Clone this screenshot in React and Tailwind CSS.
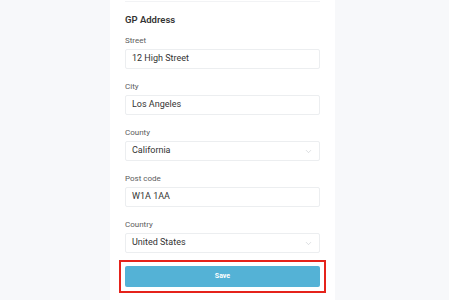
import { ChevronDown } from 'lucide-react';

const fields = [
    { label: 'Street', value: '12 High Street' },
    { label: 'City', value: 'Los Angeles' },
    { label: 'County', value: 'California', select: true },
    { label: 'Post code', value: 'W1A 1AA' },
    { label: 'Country', value: 'United States', select: true },
];

export default function App() {
    return (
        <div
            className="min-h-screen bg-[#f7f8fa] flex"
            style={{ fontFamily: 'Roboto, "Liberation Sans", sans-serif' }}
        >
            <div className="ml-[110px] w-[225px] min-h-[300px] bg-white px-[15px]">
                {/* bottom edge of the previous section */}
                <div className="h-[2px] border-b border-[#f2f3f5]" />

                <h2 className="mt-[12px] h-[12px] leading-[12px] text-[9.5px] font-semibold text-[#333]">
                    GP Address
                </h2>

                <div className="mt-[10px] flex flex-col gap-[13px]">
                    {fields.map((f) => (
                        <div key={f.label}>
                            <p className="h-[10px] leading-[10px] text-[8px] text-[#5c5c5c]">{f.label}</p>
                            <div className="mt-[3px] h-[20px] border border-[#eceef0] rounded-[2px] flex items-center pl-[6px] pr-[6px]">
                                <span className="flex-1 text-[9px] text-[#333]">{f.value}</span>
                                {f.select && (
                                    <ChevronDown size={9} strokeWidth={1.5} className="text-[#c3c7cc]" />
                                )}
                            </div>
                        </div>
                    ))}

                    {/* highlighted save action */}
                    <div className="-mx-[6px] -my-[6px] border-2 border-[#e5231b] p-[4px]">
                        <button className="block h-[21px] w-full rounded-[2px] bg-[#54b2d6] text-white text-[7px] font-bold">
                            Save
                        </button>
                    </div>
                </div>
            </div>
        </div>
    );
}
